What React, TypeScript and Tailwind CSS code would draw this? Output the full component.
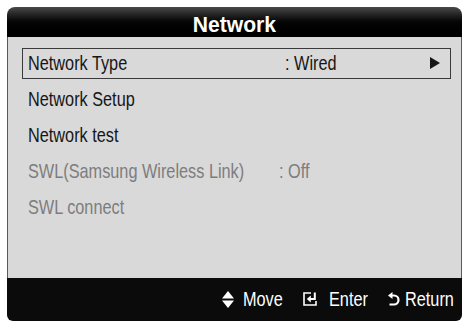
import React from "react";

type Item = {
  label: string;
  value?: string;
  labelW?: string;
  selected?: boolean;
  arrow?: boolean;
  disabled?: boolean;
};

const items: Item[] = [
  { label: "Network Type", value: ": Wired", labelW: "w-[257px]", selected: true, arrow: true },
  { label: "Network Setup" },
  { label: "Network test" },
  { label: "SWL(Samsung Wireless Link)", value: ": Off", labelW: "w-[251px]", disabled: true },
  { label: "SWL connect", disabled: true },
];

// the TV font is narrower than Arial, so squeeze it a bit
const Sq = ({ children }: { children: React.ReactNode }) => (
  <span className="block origin-left scale-x-[0.775] whitespace-nowrap text-[21px] leading-5">
    {children}
  </span>
);

const MoveIcon = () => (
  <svg width="12" height="17" viewBox="0 0 12 17" className="block fill-white">
    <polygon points="6,0 12,7.5 0,7.5" />
    <polygon points="0,9.5 12,9.5 6,17" />
  </svg>
);

const EnterIcon = () => (
  <svg width="14" height="14" viewBox="0 0 14 14" fill="none" className="block stroke-white">
    <path d="M8 1 H1 V13 H13 V9" strokeWidth="1.6" />
    <path d="M11.8 0.5 V7 H7" strokeWidth="2" />
    <path d="M3.8 7 L7.8 3.6 L7.8 10.4 Z" className="fill-white" strokeWidth="0" />
  </svg>
);

const ReturnIcon = () => (
  <svg width="12" height="15" viewBox="0 0 12 15" fill="none" className="block stroke-white">
    <path d="M3.5 3.5 H6 A4.5 4.5 0 0 1 6 12.5 H1.5" strokeWidth="2.2" />
    <path d="M0 3.5 L4.5 0 L4.5 7 Z" className="fill-white" strokeWidth="0" />
  </svg>
);

function Row({ item }: { item: Item }) {
  return (
    <div className="h-9 flex items-center">
      <div
        className={`ml-[14px] mr-[10px] flex-1 h-[31px] flex items-center pl-[5px] pr-[10px] border ${
          item.selected ? "border-[#3a3a3a]" : "border-transparent"
        } ${item.disabled ? "text-[#7d7d7d]" : "text-[#161616]"}`}
      >
        <div className={`flex items-center ${item.labelW ?? ""}`}>
          <Sq>{item.label}</Sq>
        </div>
        {item.value && <Sq>{item.value}</Sq>}
        {item.arrow && (
          <svg width="10" height="12" viewBox="0 0 10 12" className="ml-auto fill-[#161616]">
            <polygon points="0,0 10,6 0,12" />
          </svg>
        )}
      </div>
    </div>
  );
}

export default function App() {
  return (
    <div className="w-[465px] h-[323px] bg-white p-[7px] font-['Liberation_Sans',Arial,sans-serif]">
      <div className="w-[455px] h-[314px] flex flex-col">
        {/* Title bar */}
        <div className="h-[30px] rounded-t-[8px] bg-gradient-to-b from-[#4a4a4a] via-[#050505] to-black flex justify-center pt-[7px]">
          <span className="inline-block scale-x-[0.96] text-white font-bold text-[22px] leading-[22px]">
            Network
          </span>
        </div>

        {/* Menu */}
        <div className="flex-1 bg-[#d9d9d9] border-x border-[#5a5a5a] pt-[8px]">
          {items.map((item) => (
            <Row key={item.label} item={item} />
          ))}
        </div>

        {/* Help bar */}
        <div className="h-[43px] rounded-b-[6px] bg-[#0b0b0b] flex items-center justify-end pr-[8px] pb-[1px] text-white">
          <MoveIcon />
          <span className="ml-[9px] w-[39px] flex items-center">
            <Sq>Move</Sq>
          </span>
          <span className="ml-[21px]">
            <EnterIcon />
          </span>
          <span className="ml-[12px] w-[38px] flex items-center">
            <Sq>Enter</Sq>
          </span>
          <span className="ml-[21px]">
            <ReturnIcon />
          </span>
          <span className="ml-[5px] w-[49px] flex items-center">
            <Sq>Return</Sq>
          </span>
        </div>
      </div>
    </div>
  );
}
